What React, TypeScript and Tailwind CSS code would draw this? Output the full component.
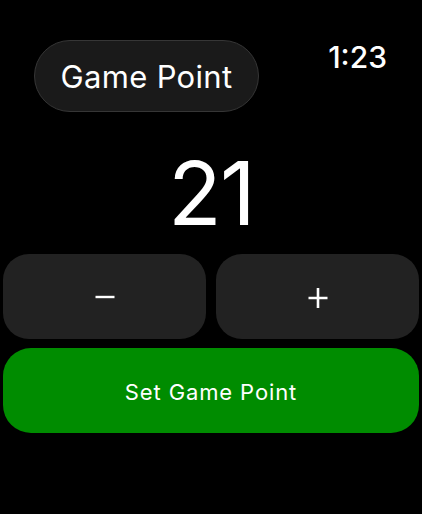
export default function App() {
  return (
    <div
      className="w-[422px] h-[514px] bg-black text-white flex flex-col px-[3px]"
      style={{ fontFamily: 'Inter, "Noto Sans", sans-serif' }}
    >
      {/* Header */}
      <div className="flex items-start justify-between pt-[40px] pl-[31px] pr-[32px]">
        <div className="h-[72px] w-[225px] rounded-full bg-[#1a1a1a] border border-[#363636] flex items-center justify-center text-[31px] tracking-[0.01em] leading-none">
          Game Point
        </div>
        <div className="text-[30px] font-medium leading-none pt-[2px]">1:23</div>
      </div>

      {/* Value */}
      <div className="flex justify-center mt-[30px] h-[102px] items-center">
        <span className="text-[88px] font-normal leading-none tracking-[-0.02em]">21</span>
      </div>

      {/* Stepper */}
      <div className="grid grid-cols-2 gap-[10px] mt-[10px]">
        <button className="h-[85px] rounded-[26px] bg-[#222] flex items-center justify-center">
          <svg width="20" height="20" viewBox="0 0 20 20">
            <path d="M0.5 10h19" stroke="white" strokeWidth="2.4" />
          </svg>
        </button>
        <button className="h-[85px] rounded-[26px] bg-[#222] flex items-center justify-center">
          <svg width="20" height="22" viewBox="0 0 20 22">
            <path d="M0.5 12h19M10 2v20" stroke="white" strokeWidth="2.6" />
          </svg>
        </button>
      </div>

      <button className="mt-[9px] h-[85px] rounded-[28px] bg-[#008c00] flex items-center justify-center text-[22px] tracking-[0.04em] pt-[4px]">
        Set Game Point
      </button>
    </div>
  );
}
